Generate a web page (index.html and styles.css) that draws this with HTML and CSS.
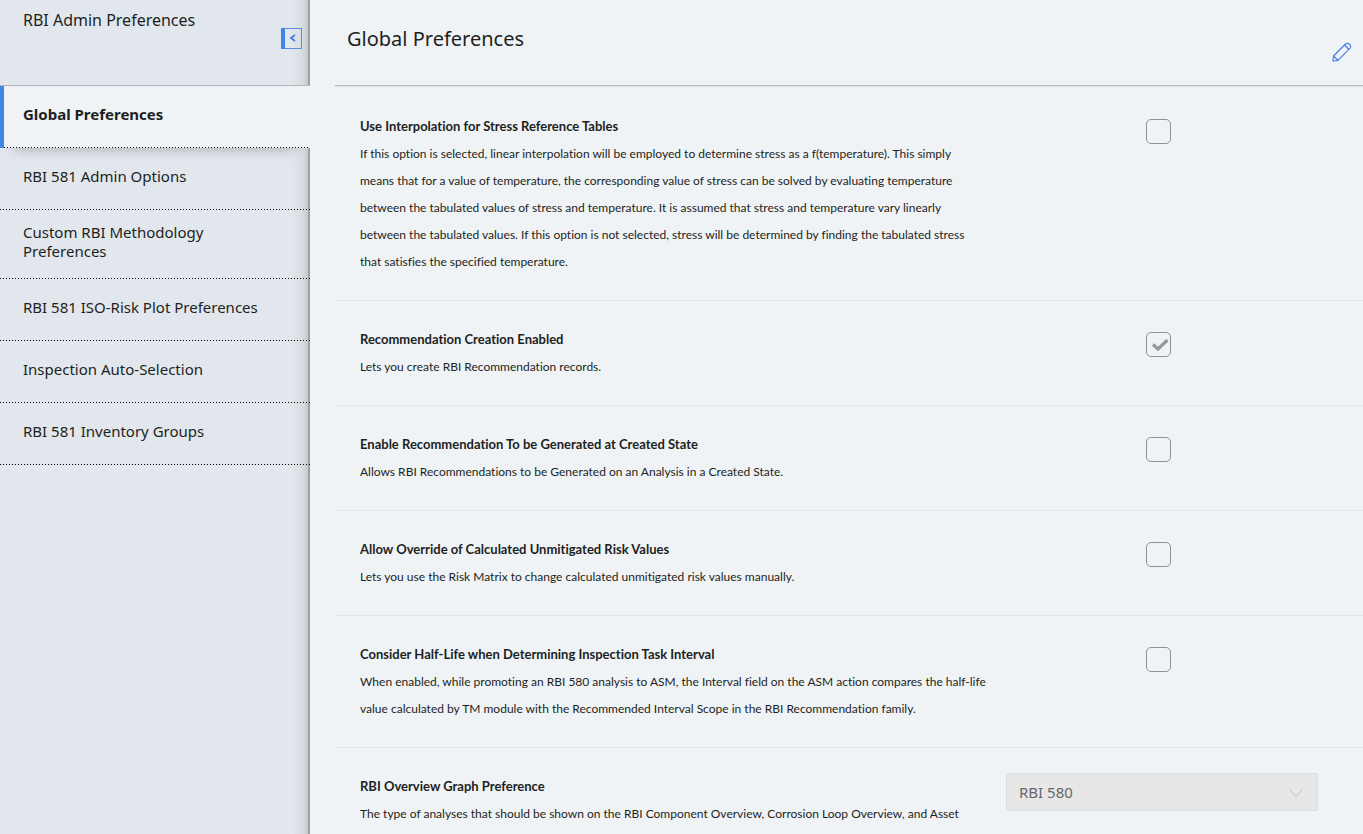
FILE: index.html
```
<!DOCTYPE html>
<html lang="en">
<head>
  <meta charset="UTF-8">
  <meta name="viewport" content="width=device-width, initial-scale=1.0">
  <title>RBI Admin Preferences</title>
  <link rel="stylesheet" href="styles.css">
</head>
<body>

  <div class="page">
    <!-- Sidebar -->
    <aside class="sidebar">
      <div class="sidebar-header">
        <h2>RBI Admin Preferences</h2>
        <button type="button" class="collapse-button" aria-label="Collapse menu">
          <svg width="21" height="21" viewBox="0 0 21 21">
            <rect x="0.5" y="0.5" width="20" height="20" fill="none" stroke="#5c8cee"/>
            <rect x="0" y="0" width="4" height="21" fill="#3f86e8"/>
            <path d="M14 7L10 10L14 13" fill="none" stroke="#3f7fe8" stroke-width="1.8"/>
          </svg>
        </button>
      </div>
      <nav class="menu">
        <a href="#" class="menu-item active"><span>Global Preferences</span></a>
        <a href="#" class="menu-item"><span>RBI 581 Admin Options</span></a>
        <a href="#" class="menu-item"><span>Custom RBI Methodology Preferences</span></a>
        <a href="#" class="menu-item"><span>RBI 581 ISO-Risk Plot Preferences</span></a>
        <a href="#" class="menu-item"><span>Inspection Auto-Selection</span></a>
        <a href="#" class="menu-item"><span>RBI 581 Inventory Groups</span></a>
      </nav>
      <div class="sidebar-rest"></div>
    </aside>

    <!-- Preferences -->
    <main class="content">
      <header class="content-header">
        <h1>Global Preferences</h1>
        <button type="button" class="edit-button" aria-label="Edit">
          <svg width="20" height="20" viewBox="0 0 20 20" fill="none" stroke="#4a80e8" stroke-width="1.2" stroke-linejoin="round">
            <path d="M1 19L1.500 14L13.500 2Q15.500 0.500 17.500 2.200Q19.500 4 18 6.200L6 18.300Z"/>
            <path d="M12.500 3L17 7.500M1.500 14L6 18.300"/>
          </svg>
        </button>
      </header>

      <div class="pref-row">
        <div class="pref-text">
          <label for="interpolation">Use Interpolation for Stress Reference Tables</label>
          <p>If this option is selected, linear interpolation will be employed to determine stress as a f(temperature). This simply<br>
            means that for a value of temperature, the corresponding value of stress can be solved by evaluating temperature<br>
            between the tabulated values of stress and temperature. It is assumed that stress and temperature vary linearly<br>
            between the tabulated values. If this option is not selected, stress will be determined by finding the tabulated stress<br>
            that satisfies the specified temperature.</p>
        </div>
        <div class="pref-check"><input type="checkbox" id="interpolation" disabled></div>
      </div>

      <div class="pref-row">
        <div class="pref-text">
          <label for="recCreation">Recommendation Creation Enabled</label>
          <p>Lets you create RBI Recommendation records.</p>
        </div>
        <div class="pref-check"><input type="checkbox" id="recCreation" checked disabled></div>
      </div>

      <div class="pref-row">
        <div class="pref-text">
          <label for="createdState">Enable Recommendation To be Generated at Created State</label>
          <p>Allows RBI Recommendations to be Generated on an Analysis in a Created State.</p>
        </div>
        <div class="pref-check"><input type="checkbox" id="createdState" disabled></div>
      </div>

      <div class="pref-row">
        <div class="pref-text">
          <label for="override">Allow Override of Calculated Unmitigated Risk Values</label>
          <p>Lets you use the Risk Matrix to change calculated unmitigated risk values manually.</p>
        </div>
        <div class="pref-check"><input type="checkbox" id="override" disabled></div>
      </div>

      <div class="pref-row">
        <div class="pref-text">
          <label for="halfLife">Consider Half-Life when Determining Inspection Task Interval</label>
          <p>When enabled, while promoting an RBI 580 analysis to ASM, the Interval field on the ASM action compares the half-life<br>
            value calculated by TM module with the Recommended Interval Scope in the RBI Recommendation family.</p>
        </div>
        <div class="pref-check"><input type="checkbox" id="halfLife" disabled></div>
      </div>

      <div class="pref-row">
        <div class="pref-text">
          <label for="graphPref">RBI Overview Graph Preference</label>
          <p>The type of analyses that should be shown on the RBI Component Overview, Corrosion Loop Overview, and Asset</p>
        </div>
        <div class="pref-select">
          <select id="graphPref" disabled>
            <option>RBI 580</option>
          </select>
          <svg width="16" height="10" viewBox="0 0 16 10">
            <path d="M1 1L8 8L15 1" fill="none" stroke="#cfd3d6" stroke-width="1.3"/>
          </svg>
        </div>
      </div>
    </main>
  </div>

</body>
</html>
```
FILE: styles.css
```
* {
  margin: 0;
  padding: 0;
  box-sizing: border-box;
}

body {
  font-family: "Noto Sans", sans-serif;
  background: #eff3f6;
  color: #1d1f22;
}

.page {
  display: flex;
  height: 100vh;
  overflow: hidden;
}

button {
  display: block;
  border: none;
  background: none;
  cursor: pointer;
}

button svg {
  display: block;
}

/* Sidebar */
.sidebar {
  display: flex;
  flex-direction: column;
  flex: 0 0 310px;
  background: linear-gradient(to left, #9e9fa2 2px, #c5cacd 2px, #d8dde1 8px, #e2e7ee 18px);
}

.sidebar-header {
  display: flex;
  justify-content: space-between;
  height: 86px;
  padding: 9px 8px 0 23px;
  border-bottom: 1px solid #b1b4b8;
}

.sidebar-header h2 {
  font-size: 16px;
  line-height: 22px;
  font-weight: 400;
}

.collapse-button {
  align-self: flex-start;
  margin-top: 19px;
}

/* the last pixel row of each item is a dotted line */
.menu-item {
  display: flex;
  align-items: center;
  min-height: 62px;
  padding: 13px 36px 18px 23px;
  background: repeating-linear-gradient(to right, #000 0 1px, transparent 1px 3px) bottom / 100% 1px no-repeat;
  color: #1d1f22;
  font-size: 15px;
  line-height: 19px;
  text-decoration: none;
}

.menu-item.active {
  background-color: #eff3f6;
  border-left: 4px solid #3f86e8;
  padding-left: 19px;
  font-weight: 700;
  box-shadow: 0 14px 14px -14px rgba(0, 0, 0, 0.3);
}

.sidebar-rest {
  flex: 1;
}

/* Content */
.content {
  flex: 1;
  min-width: 0;
  margin-left: 25px;
}

.content-header {
  display: flex;
  justify-content: space-between;
  height: 87px;
  margin-bottom: 1px;
  padding: 25px 11px 0 12px;
  border-bottom: 1px solid #dfe2e4;
  box-shadow: inset 0 -1px #b9bcbf;
}

.content-header h1 {
  font-size: 20px;
  line-height: 28px;
  font-weight: 400;
}

.edit-button {
  align-self: flex-start;
  margin-top: 17px;
}

.pref-row {
  display: grid;
  grid-template-columns: 1fr 312px;
  column-gap: 12px;
  padding: 25px 45px 25px 25px;
  border-bottom: 1px solid #e2e6ea;
}

.pref-text {
  font-family: Lato, "Noto Sans", sans-serif;
  font-size: 12px;
  font-variant-ligatures: none;
  line-height: 27px;
}

.pref-text label {
  display: block;
  font-size: 13px;
  font-weight: 700;
}

.pref-check {
  padding: 6px 0 0 140px;
}

.pref-check input {
  display: block;
  appearance: none;
  width: 25px;
  height: 25px;
  border: 1px solid #8f9194;
  border-radius: 5px;
}

.pref-check input:checked {
  background: url("data:image/svg+xml,%3Csvg xmlns='http://www.w3.org/2000/svg' viewBox='0 0 23 23'%3E%3Cpath d='M6 11.500L11 16L20.500 7' fill='none' stroke='%23959799' stroke-width='3.200'/%3E%3C/svg%3E") center no-repeat;
}

.pref-select {
  position: relative;
}

.pref-select select {
  display: block;
  appearance: none;
  width: 100%;
  height: 38px;
  padding: 0 12px;
  border: 1px solid #d8dde2;
  border-radius: 3px;
  background: #e7e7e7;
  color: #65676a;
  font-family: inherit;
  font-size: 15px;
  opacity: 1;
}

.pref-select svg {
  position: absolute;
  top: 15px;
  right: 14px;
  pointer-events: none;
}
```
